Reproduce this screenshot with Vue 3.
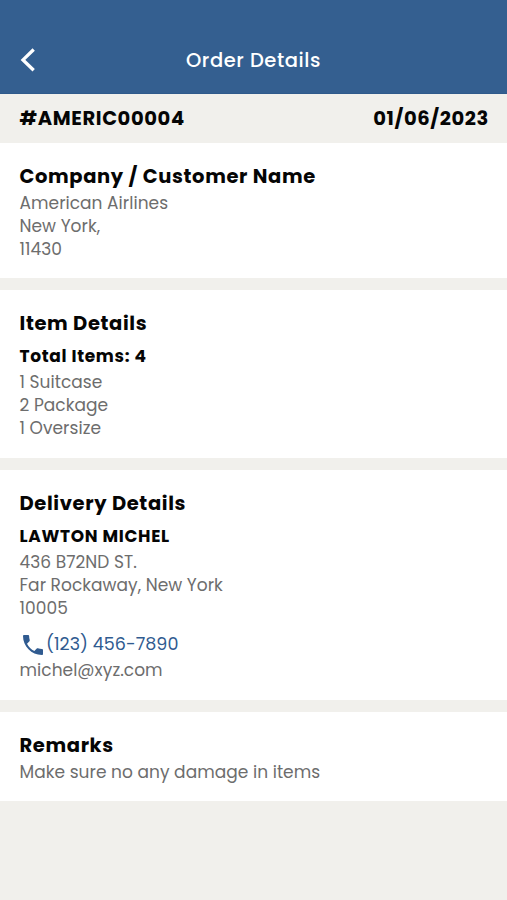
<script setup>
const customer = ['American Airlines', 'New York,', '11430']
const items = ['1 Suitcase', '2 Package', '1 Oversize']
const address = ['436 B72ND ST.', 'Far Rockaway, New York', '10005']
</script>

<template>
  <div class="screen">
    <header class="bar">
      <svg class="back" viewBox="0 0 16 26" aria-hidden="true">
        <path d="M13.7 2.5 L3 12.9 L13.7 23.3" />
      </svg>
      <h1><span>Order Details</span></h1>
    </header>
    <div class="strip">
      <span class="order-id">#AMERIC00004</span>
      <span class="date">01/06/2023</span>
    </div>
    <main class="cards">
      <section class="card company">
        <h2><span>Company / Customer Name</span></h2>
        <p v-for="line in customer" :key="line"><span>{{ line }}</span></p>
      </section>
      <section class="card items">
        <h2><span>Item Details</span></h2>
        <h3><span>Total Items: 4</span></h3>
        <p v-for="line in items" :key="line"><span>{{ line }}</span></p>
      </section>
      <section class="card delivery">
        <h2><span>Delivery Details</span></h2>
        <h3><span>LAWTON MICHEL</span></h3>
        <p v-for="line in address" :key="line"><span>{{ line }}</span></p>
        <div class="phone">
          <svg viewBox="3 3 18 18" aria-hidden="true">
            <path d="M6.62 10.79c1.44 2.83 3.76 5.14 6.59 6.59l2.2-2.2c.27-.27.67-.36 1.02-.24 1.12.37 2.33.57 3.57.57.55 0 1 .45 1 1V20c0 .55-.45 1-1 1-9.39 0-17-7.61-17-17 0-.55.45-1 1-1h3.5c.55 0 1 .45 1 1 0 1.25.2 2.45.57 3.57.11.35.03.74-.25 1.02l-2.2 2.2z" />
          </svg>
          <span>(123) 456-7890</span>
        </div>
        <p class="email"><span>michel@xyz.com</span></p>
      </section>
      <section class="card remarks">
        <h2><span>Remarks</span></h2>
        <p><span>Make sure no any damage in items</span></p>
      </section>
    </main>
  </div>
</template>

<style>
body { background: #f1f0ec; }
</style>

<style scoped>
.screen {
  min-height: 900px;
  background: #f1f0ec;
  font-family: Poppins, Inter, "Liberation Sans", sans-serif;
  color: #050505;
}
h1, h2, h3, p { margin: 0; white-space: nowrap; }
.bar {
  box-sizing: border-box;
  height: 94px;
  padding: 26px 20px 0;
  display: grid;
  grid-template-columns: 16px 1fr 16px;
  align-items: center;
  background: #345f90;
  border-bottom: 1px solid #2f5a8b;
}
.back { width: 16px; height: 26px; fill: none; stroke: #fff; stroke-width: 3.3; }
h1 { padding-top: 2px; color: #fff; font-size: 19.5px; font-weight: 500; letter-spacing: .57px; line-height: 28px; text-align: center; }
.strip {
  height: 49px;
  padding: 0 18px 0 19.5px;
  display: flex;
  align-items: center;
  justify-content: space-between;
  font-size: 19.5px;
  font-weight: 700;
  letter-spacing: .62px;
}
.cards { display: flex; flex-direction: column; gap: 12px; }
.card { box-sizing: border-box; padding: 20px 19.5px 0; background: #fff; }
.company { height: 135px; }
.items { height: 168px; }
.delivery { height: 230px; }
.remarks { height: 89px; }
h2 { font-size: 19.5px; font-weight: 700; line-height: 27px; margin-bottom: 1.6px; letter-spacing: .63px; }
h3 { font-size: 17px; font-weight: 700; line-height: 24px; margin: 7px 0 2.9px; letter-spacing: .67px; }
p { color: #6d6d6d; font-size: 17px; line-height: 23.3px; letter-spacing: .04px; }
.phone { display: flex; align-items: center; gap: 3.5px; height: 28px; margin-top: 9px; padding-left: 3px; color: #305b90; font-size: 17.5px; letter-spacing: .04px; }
.phone svg { width: 20px; height: 20px; margin-top: 2px; fill: #305b90; }
.email { margin-top: 1.2px; }
</style>
